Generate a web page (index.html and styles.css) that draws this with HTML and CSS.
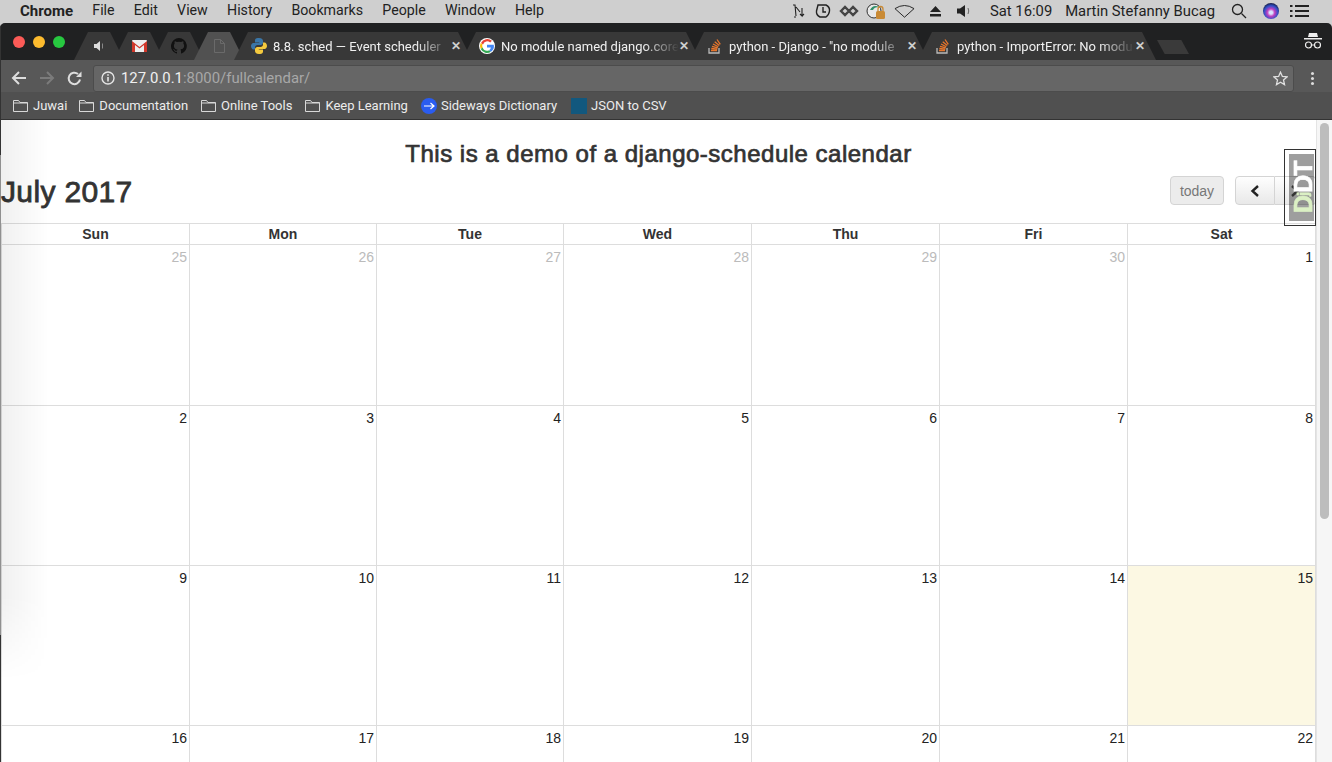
FILE: index.html
```html
<!DOCTYPE html>
<html lang="en">
<head>
  <meta charset="UTF-8" />
  <title>Calendar</title>
  <link rel="stylesheet" href="styles.css">
</head>
<body>

<div class="menubar">
  <div class="menu-left">
    <span class="app-name">Chrome</span>
    <span>File</span><span>Edit</span><span>View</span><span>History</span><span>Bookmarks</span><span>People</span><span>Window</span><span>Help</span>
  </div>
  <div class="menu-right">
    <svg width="16" height="16" viewBox="0 0 16 16" fill="none" stroke="#222" stroke-width="1.1"><path d="M2 2h2l1 11M3 14h2M5 4l4 5M11 5v8l-2-2M11 13l2-2"/></svg>
    <svg width="16" height="16" viewBox="0 0 16 16" fill="none" stroke="#222" stroke-width="1.4"><path d="M3 2h8q4 2 3.500 6t-3.500 6h-6q-4-2-3.500-6z"/><path d="M8 4v5h3"/></svg>
    <svg width="20" height="16" viewBox="0 0 20 16" fill="none" stroke="#444" stroke-width="2.4"><path d="M2 8l4-4 4 4 4 4 4-4-4-4-4 4-4 4z"/></svg>
    <svg class="m-cloud" width="20" height="18" viewBox="0 0 20 18"><circle cx="8" cy="9" r="7" fill="#e8e8e8" stroke="#333"/><path d="M4 8q3-6 9-3-5 0-6 3z" fill="#2f8f6a"/><rect x="10" y="9" width="9" height="8" rx="1.500" fill="#c98a35"/><path d="M12 9V7a2.500 2.500 0 0 1 5 0v2" fill="none" stroke="#c98a35" stroke-width="1.300"/></svg>
    <svg width="21" height="14" viewBox="0 0 22 14" fill="none" stroke="#222"><path d="M1 4.500Q11-2 21 4.500L11 13.500z"/></svg>
    <svg class="m-eject" width="13" height="11" viewBox="0 0 13 11" fill="#222"><path d="M6.500 0L12 6H1zM1 8h11v2.500H1z"/></svg>
    <svg class="m-vol" width="14" height="12" viewBox="0 0 14 12" fill="#222"><path d="M0 3.500h3L8 0v12L3 8.500H0z"/><path d="M11 3q1.500 3 0 6" fill="none" stroke="#666"/></svg>
    <span class="clock">Sat 16:09</span>
    <span class="user">Martin Stefanny Bucag</span>
    <svg width="16" height="16" viewBox="0 0 16 16" fill="none" stroke="#222" stroke-width="1.300"><circle cx="6.500" cy="6.500" r="5"/><path d="M10.500 10.500L15 15"/></svg>
    <div class="siri"></div>
    <svg width="20" height="12" viewBox="0 0 20 12" fill="#222"><path d="M0 0h2.500v2H0zM5 0h14v2H5zM0 5h2.500v2H0zM5 5h14v2H5zM0 10h2.500v2H0zM5 10h14v2H5z"/></svg>
  </div>
</div>

<div class="window">
  <div class="tabstrip">
    <div class="traffic">
      <i class="dot red"></i><i class="dot yellow"></i><i class="dot green"></i>
    </div>
    <div class="tabs">
      <div class="tab pinned">
        <svg width="11" height="10" viewBox="0 0 11 10" fill="#ddd"><path d="M0 3h2.500L6 0v10L2.500 7H0z"/><path d="M8 2.500h1v5H8z" fill="#888"/></svg>
      </div>
      <div class="tab pinned">
        <svg width="15" height="12" viewBox="0 0 15 12"><rect width="15" height="12" rx="1" fill="#eee"/><path d="M0 1l7.500 6L15 1v11h-3V5L7.500 8.500 3 5v7H0z" fill="#d0382b"/></svg>
      </div>
      <div class="tab pinned">
        <svg width="16" height="16" viewBox="0 0 16 16" fill="#111"><path d="M8 0a8 8 0 0 0-2.500 15.600c.4.100.5-.200.5-.400v-1.400c-2.200.500-2.700-1-2.700-1-.4-.900-.9-1.200-.9-1.200-.7-.500.100-.500.100-.500.800.100 1.200.800 1.200.800.700 1.200 1.900.900 2.300.700.100-.500.300-.900.500-1.100-1.800-.200-3.600-.900-3.600-4 0-.900.300-1.600.800-2.100-.1-.200-.4-1 .1-2.100 0 0 .7-.200 2.200.800a7.600 7.600 0 0 1 4 0c1.500-1 2.200-.800 2.200-.800.500 1.100.200 1.900.1 2.100.5.600.8 1.300.8 2.100 0 3.100-1.900 3.700-3.700 3.900.3.300.6.800.6 1.500v2.200c0 .2.100.5.600.400A8 8 0 0 0 8 0z"/></svg>
      </div>
      <div class="tab pinned active">
        <svg width="11" height="14" viewBox="0 0 11 14" fill="none" stroke="#6a6a6a"><path d="M.5.500h6l4 4v9h-10zM6.500.500v4h4"/></svg>
      </div>
      <div class="tab wide">
        <svg width="16" height="16" viewBox="0 0 16 16"><path d="M8 0C4 0 4 1.500 4 3v1.500h4.200V5H2.500C1 5 0 6.500 0 8s1 3.500 2.500 3.500H4V9.500C4 8 5 7 6.500 7h3C11 7 12 6 12 4.500V3c0-1.500-1-3-4-3z" fill="#3a76a8"/><path d="M8 16c4 0 4-1.500 4-3v-1.500H7.800V11h5.700c1.500 0 2.500-1.500 2.500-3s-1-3.500-2.500-3.500H12v2C12 8 11 9 9.500 9h-3C5 9 4 10 4 11.500V13c0 1.500 1 3 4 3z" fill="#f4c93e"/></svg>
        <span class="tab-title">8.8. sched — Event scheduler</span>
        <span class="tab-close">✕</span>
      </div>
      <div class="tab wide">
        <svg width="16" height="16" viewBox="0 0 16 16"><circle cx="8" cy="8" r="8" fill="#fff"/><path d="M8 3.200a4.800 4.800 0 0 1 3.200 1.200l1.700-1.700A7 7 0 0 0 2 5l2 1.500A4.800 4.800 0 0 1 8 3.200z" fill="#e94335"/><path d="M3.200 8c0-.5.100-1 .3-1.500L1.700 5a7 7 0 0 0 0 6l2-1.500A4.800 4.800 0 0 1 3.200 8z" fill="#fbbc05"/><path d="M8 12.800a4.800 4.800 0 0 1-4.300-3.300L1.700 11A7 7 0 0 0 12 13.700l-1.900-1.500a5 5 0 0 1-2.100.6z" fill="#34a853"/><path d="M14.800 6.700H8v2.800h3.900a3.400 3.400 0 0 1-1.800 2.700l1.900 1.500A7 7 0 0 0 14.800 6.700z" fill="#4285f4"/></svg>
        <span class="tab-title">No module named django.core</span>
        <span class="tab-close">✕</span>
      </div>
      <div class="tab wide">
        <svg width="16" height="16" viewBox="0 0 14 16" fill="none"><path d="M1 10v5h10v-5" stroke="#bbb" stroke-width="1.300"/><path d="M3 12.500h6M3.300 10.500l6 .6M4 8.300l5.800 1.500M5 6l5.300 2.800M6.700 3.800l4.600 3.700M9 1.500l3.300 4.800" stroke="#e8762c" stroke-width="1.300"/></svg>
        <span class="tab-title">python - Django - "no module</span>
        <span class="tab-close">✕</span>
      </div>
      <div class="tab wide">
        <svg width="16" height="16" viewBox="0 0 14 16" fill="none"><path d="M1 10v5h10v-5" stroke="#bbb" stroke-width="1.300"/><path d="M3 12.500h6M3.300 10.500l6 .6M4 8.300l5.800 1.500M5 6l5.300 2.800M6.700 3.800l4.600 3.700M9 1.500l3.300 4.800" stroke="#e8762c" stroke-width="1.300"/></svg>
        <span class="tab-title">python - ImportError: No modu</span>
        <span class="tab-close">✕</span>
      </div>
      <div class="new-tab"></div>
    </div>
    <svg class="incognito" width="18" height="17" viewBox="0 0 18 17" fill="none"><path d="M5 1h8l1 4H4zM0 6h18v1.500H0z" fill="#eee"/><circle cx="4.500" cy="13" r="3" stroke="#eee" stroke-width="1.200"/><circle cx="13.500" cy="13" r="3" stroke="#eee" stroke-width="1.200"/><path d="M7.500 13h3" stroke="#eee"/></svg>
  </div>

  <div class="toolbar">
    <svg class="nav" width="16" height="14" viewBox="0 0 16 14" fill="none" stroke="#ddd" stroke-width="2"><path d="M15 7H2M8 1L2 7l6 6"/></svg>
    <svg class="nav" width="16" height="14" viewBox="0 0 16 14" fill="none" stroke="#7b7b7b" stroke-width="2"><path d="M1 7h13M8 1l6 6-6 6"/></svg>
    <svg class="nav" width="15" height="15" viewBox="0 0 15 15" fill="none" stroke="#ddd" stroke-width="2"><path d="M13 8.500A5.700 5.700 0 1 1 11 3"/><path d="M14.500 .5v5.500H9z" fill="#ddd" stroke="none"/></svg>
    <div class="omnibox">
      <svg width="14" height="14" viewBox="0 0 14 14" fill="none"><circle cx="7" cy="7" r="6" stroke="#e4e4e4" stroke-width="1.400"/><path d="M7 6v4.500M7 3.200v1.600" stroke="#e4e4e4" stroke-width="1.600"/></svg>
      <span class="url"><b>127.0.0.1</b>:8000/fullcalendar/</span>
      <svg class="star" width="15" height="15" viewBox="0 0 15 15" fill="none" stroke="#e0e0e0" stroke-width="1.300"><path d="M7.500 1.200l1.900 4.300 4.600.4-3.500 3.100 1 4.600-4-2.400-4 2.400 1-4.600L1 5.900l4.600-.4z"/></svg>
    </div>
    <div class="kebab"><i></i><i></i><i></i></div>
  </div>

  <div class="bookmarks">
    <span class="bm first"><svg class="folder" width="15" height="13" viewBox="0 0 15 13" fill="none" stroke="#d8d8d8"><path d="M.5 12.500v-11h5l1.500 2h7.500v9zM.5 4h14"/></svg>Juwai</span>
    <span class="bm"><svg class="folder" width="15" height="13" viewBox="0 0 15 13" fill="none" stroke="#d8d8d8"><path d="M.5 12.500v-11h5l1.500 2h7.500v9zM.5 4h14"/></svg>Documentation</span>
    <span class="bm"><svg class="folder" width="15" height="13" viewBox="0 0 15 13" fill="none" stroke="#d8d8d8"><path d="M.5 12.500v-11h5l1.500 2h7.500v9zM.5 4h14"/></svg>Online Tools</span>
    <span class="bm"><svg class="folder" width="15" height="13" viewBox="0 0 15 13" fill="none" stroke="#d8d8d8"><path d="M.5 12.500v-11h5l1.500 2h7.500v9zM.5 4h14"/></svg>Keep Learning</span>
    <span class="bm tight sideways"><svg width="16" height="16" viewBox="0 0 16 16"><circle cx="8" cy="8" r="8" fill="#2a5cf0"/><path d="M3 8h10M9.500 5L13 8l-3.500 3" fill="none" stroke="#fff" stroke-width="1.200"/></svg>Sideways Dictionary</span>
    <span class="bm tight"><span class="json-icon"></span>JSON to CSV</span>
  </div>

  <div class="page">
    <div class="content">
      <h3 class="demo-title">This is a demo of a django-schedule calendar</h3>
      <div class="fc-toolbar">
        <h2>July 2017</h2>
        <div class="fc-buttons">
          <button class="fc-btn fc-today">today</button>
          <div class="fc-group">
            <button class="fc-btn fc-prev"><svg width="10" height="12" viewBox="0 0 10 12" fill="none" stroke="#222" stroke-width="2.400"><path d="M8 1L2.500 6 8 11"/></svg></button>
            <button class="fc-btn fc-next"><svg width="10" height="12" viewBox="0 0 10 12" fill="none" stroke="#555" stroke-width="2.400"><path d="M2 1l5.500 5L2 11"/></svg></button>
          </div>
        </div>
      </div>
      <div class="calendar">
        <div class="head">Sun</div><div class="head">Mon</div><div class="head">Tue</div><div class="head">Wed</div><div class="head">Thu</div><div class="head">Fri</div><div class="head">Sat</div>
        <div class="day other">25</div><div class="day other">26</div><div class="day other">27</div><div class="day other">28</div><div class="day other">29</div><div class="day other">30</div><div class="day">1</div>
        <div class="day">2</div><div class="day">3</div><div class="day">4</div><div class="day">5</div><div class="day">6</div><div class="day">7</div><div class="day">8</div>
        <div class="day">9</div><div class="day">10</div><div class="day">11</div><div class="day">12</div><div class="day">13</div><div class="day">14</div><div class="day today">15</div>
        <div class="day">16</div><div class="day">17</div><div class="day">18</div><div class="day">19</div><div class="day">20</div><div class="day">21</div><div class="day">22</div>
      </div>
      <div class="shade"></div>
      <div class="djdt"><div class="djdt-inner"><span class="dj">D<small>j</small></span>DT</div></div>
    </div>
    <div class="scrollbar"><div class="thumb"></div></div>
  </div>
</div>

</body>
</html>
```

FILE: styles.css
```css
:root {
  --tab-bg: #383838;
  --strip-bg: #202122;
  --line: #dddddd;
  --text: #333333;
  --edge: #333333;
}

* {
  box-sizing: border-box;
  margin: 0;
  padding: 0;
}

html, body {
  width: 1332px;
  height: 762px;
  overflow: hidden;
}

body {
  font-family: "Liberation Sans", sans-serif;
  background: #cfcfcf;
  display: flex;
  flex-direction: column;
}

/* mac menu bar */
.menubar {
  height: 23px;
  flex: none;
  background: #cfcfcf;
  display: flex;
  justify-content: space-between;
  align-items: center;
  font-family: Roboto, sans-serif;
  font-size: 14.8px;
  color: #222;
  padding: 0 22px 1px 20px;
}

.menu-left {
  display: flex;
  gap: 19.25px;
  font-size: 14.2px;
}

.app-name {
  font-size: 15px;
  font-weight: 700;
}

.menu-right {
  display: flex;
  align-items: center;
  gap: 8px;
}

.m-cloud { margin-left: -1px; }
.m-eject { margin-left: 6px; }
.m-vol { margin-left: 7px; }

.clock {
  margin-left: 11px;
  margin-right: 5px;
}

.user {
  margin-right: 8px;
}

.siri {
  width: 16px;
  height: 16px;
  margin: 0 3px 0 8px;
  border-radius: 50%;
  background: radial-gradient(circle at 50% 60%, #d9e6ff 0 12%, #c040c0 30%, #3050c8 55%, #141430 80%);
}

/* browser window */
.window {
  flex: 1;
  min-height: 0;
  display: flex;
  flex-direction: column;
  border-radius: 5px 5px 0 0;
  overflow: hidden;
}

.tabstrip {
  height: 37px;
  flex: none;
  background: var(--strip-bg);
  border-left: 1px solid var(--edge);
  display: flex;
  position: relative;
}

.traffic {
  width: 73px;
  flex: none;
  display: flex;
  gap: 8px;
  padding: 13px 0 0 12px;
}

.dot {
  width: 12px;
  height: 12px;
  border-radius: 50%;
}

.red { background: #fc5b57; }
.yellow { background: #fdbb2e; }
.green { background: #27c840; }

.tabs {
  display: flex;
  padding-top: 9px;
  height: 37px;
}

.tab {
  height: 28px;
  display: flex;
  align-items: center;
  justify-content: center;
  background: var(--tab-bg);
  clip-path: polygon(14px 0, calc(100% - 14px) 0, 100% 100%, 0 100%);
  font-family: Roboto, sans-serif;
  font-size: 13px;
  color: #f0f0f0;
}

.pinned {
  width: 50px;
  margin-right: -10px;
}

.active {
  background: #515151;
}

.wide {
  width: 238px;
  justify-content: flex-start;
  padding: 0 11px 0 17px;
  gap: 6px;
  margin-right: -10px;
}

.tab-title {
  flex: 1;
  min-width: 0;
  white-space: nowrap;
  overflow: hidden;
  -webkit-mask-image: linear-gradient(to right, #000 80%, transparent 100%);
  mask-image: linear-gradient(to right, #000 80%, transparent 100%);
}

.tab-close {
  margin-left: -6px;
  font-size: 12px;
  font-weight: 700;
  color: #d0d0d0;
}

.new-tab {
  width: 32px;
  height: 14px;
  margin: 8px 0 0 11px;
  background: #3a3a3a;
  clip-path: polygon(0 0, 76% 0, 100% 100%, 24% 100%);
}

.incognito {
  position: absolute;
  right: 10px;
  top: 9px;
}

.toolbar {
  height: 32px;
  flex: none;
  background: #585858;
  border-left: 1px solid var(--edge);
  display: flex;
  align-items: center;
  padding: 4px 0 0 10px;
}

.nav {
  margin-right: 12px;
}

.omnibox {
  width: 1201px;
  height: 27px;
  margin-left: -1px;
  background: #666666;
  border: 1px solid #4c4c4c;
  border-radius: 3px;
  display: flex;
  align-items: center;
  padding: 0 5px 0 7px;
  gap: 6px;
  font-family: Roboto, sans-serif;
  font-size: 14.9px;
  color: #a8a8a8;
}

.url b {
  font-weight: 400;
  color: #f0f0f0;
}

.star {
  margin-left: auto;
}

.kebab {
  margin-left: 17px;
  display: flex;
  flex-direction: column;
  gap: 2px;
}

.kebab i {
  width: 3px;
  height: 3px;
  border-radius: 50%;
  background: #ddd;
}

.bookmarks {
  height: 28px;
  flex: none;
  background: #505050;
  border-left: 1px solid var(--edge);
  border-bottom: 1px solid #333;
  display: flex;
  align-items: center;
  padding-left: 12px;
  gap: 13px;
  font-family: Roboto, sans-serif;
  font-size: 13px;
  color: #ececec;
}

.bm {
  display: flex;
  align-items: center;
  gap: 5px;
}

.bm.first {
  margin-right: -1px;
}

.bm.tight {
  gap: 4px;
}

.bm.sideways {
  margin-right: 1px;
}

.json-icon {
  width: 16px;
  height: 16px;
  background: #12587e;
}

/* page area */
.page {
  flex: 1;
  min-height: 0;
  display: flex;
  padding-left: 1px;
  background: linear-gradient(to bottom, var(--edge) 35px, #909090 35px, #909090 515px, var(--edge) 515px) left / 1px 100% no-repeat, #fff;
}

.content {
  flex: 1;
  min-width: 0;
  position: relative;
  color: var(--text);
}

.demo-title {
  font-size: 24px;
  font-weight: 400;
  -webkit-text-stroke: .7px #333;
  letter-spacing: .5px;
  line-height: 26px;
  text-align: center;
  padding-top: 21px;
  height: 56px;
}

.fc-toolbar {
  height: 47px;
  display: flex;
  justify-content: space-between;
  align-items: flex-start;
}

.fc-toolbar h2 {
  font-size: 30px;
  line-height: 32px;
  font-weight: 400;
  letter-spacing: .35px;
  -webkit-text-stroke: .8px #333;
}

.fc-buttons {
  display: flex;
  gap: 11px;
}

.fc-btn {
  height: 29px;
  border: 1px solid #d4d4d4;
  background: linear-gradient(#fefefe, #e8e8e8);
  border-radius: 4px;
  font-family: "Liberation Sans", sans-serif;
  font-size: 14px;
  color: #333;
  display: flex;
  align-items: center;
  justify-content: center;
}

.fc-today {
  width: 54px;
  background: #ececec;
  color: #777;
}

.fc-group {
  display: flex;
}

.fc-prev {
  width: 40px;
  border-radius: 4px 0 0 4px;
}

.fc-next {
  width: 41px;
  border-left: none;
  border-radius: 0 4px 4px 0;
}

.calendar {
  display: grid;
  grid-template-columns: 188px 187px 187px 188px 188px 188px 1fr;
  grid-template-rows: 21px 161px repeat(3, 160px);
  border-top: 1px solid var(--line);
  border-left: 1px solid var(--line);
}

.head {
  border-right: 1px solid var(--line);
  border-bottom: 1px solid var(--line);
  font-size: 14px;
  font-weight: 700;
  line-height: 20px;
  text-align: center;
}

.day {
  border-right: 1px solid var(--line);
  border-bottom: 1px solid var(--line);
  font-size: 14px;
  line-height: 16px;
  padding: 4px 2px 0 0;
  text-align: right;
  color: #222;
}

.other {
  color: #bbbbbb;
}

.today {
  background: #fcf8e3;
}

.shade {
  position: absolute;
  left: 0;
  top: 0;
  width: 48px;
  height: 560px;
  background: linear-gradient(to right, rgba(0, 0, 0, .06), transparent);
  -webkit-mask-image: linear-gradient(to bottom, #000 85%, transparent);
  mask-image: linear-gradient(to bottom, #000 85%, transparent);
  pointer-events: none;
}

.djdt {
  position: absolute;
  right: 0;
  top: 29px;
  width: 32px;
  height: 77px;
  border: 1px solid #333;
  padding: 4px 0 4px 4px;
}

.djdt-inner {
  height: 100%;
  background: rgba(0, 0, 0, .38);
  writing-mode: vertical-rl;
  transform: rotate(180deg);
  padding-right: 3px;
  font-size: 25px;
  font-weight: 700;
  -webkit-text-stroke: .6px;
  letter-spacing: -1px;
  line-height: 22px;
  text-align: center;
  color: #fff;
}

.dj {
  color: #dbf0c4;
}

.dj small {
  font-size: 15px;
}

.scrollbar {
  width: 16px;
  flex: none;
  background: #f6f6f6;
  border-left: 1px solid #e4e4e4;
  padding: 3px 3px 0 3px;
}

.thumb {
  height: 396px;
  border-radius: 5px;
  background: #bdbdbd;
}
```
